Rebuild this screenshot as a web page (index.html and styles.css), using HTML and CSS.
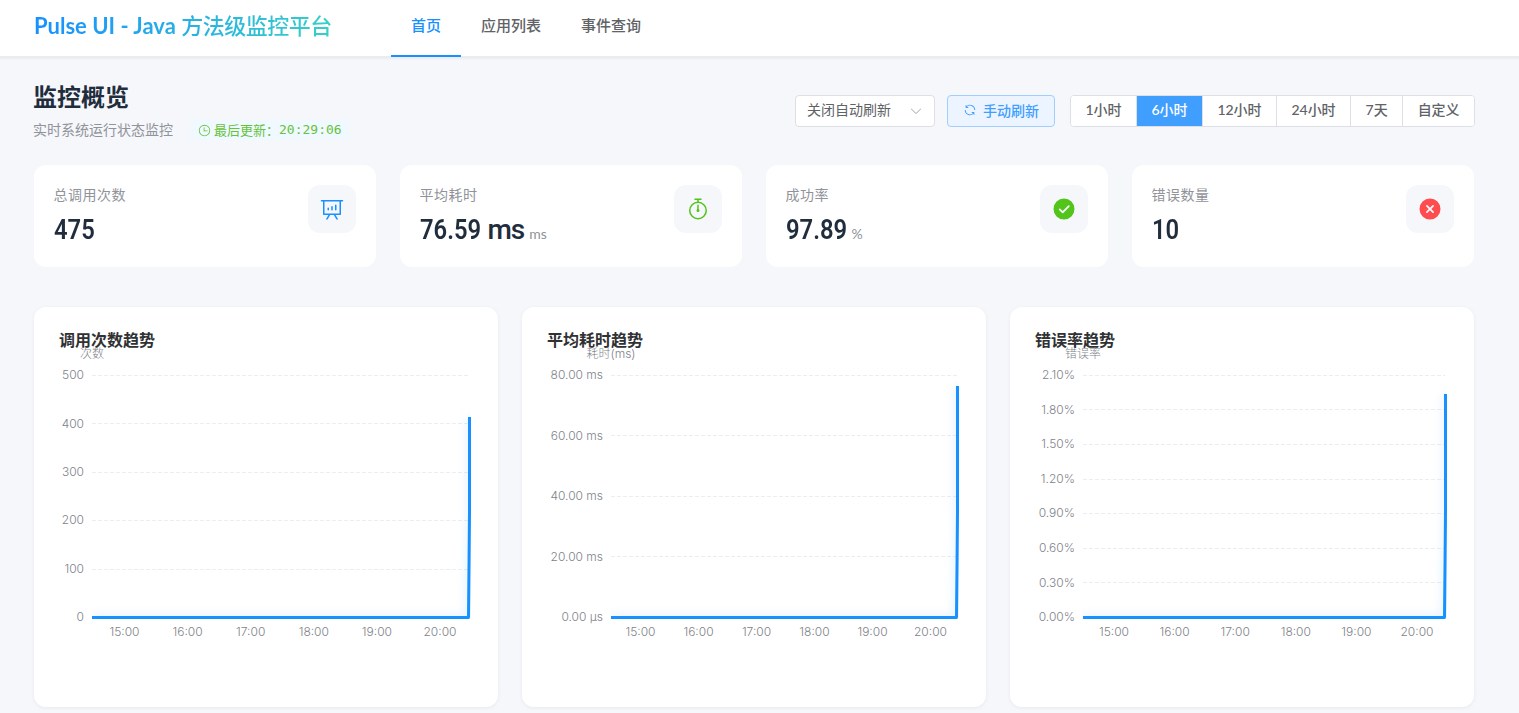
FILE: index.html
```html
<!DOCTYPE html>
<html lang="zh-CN">
<head>
  <meta charset="UTF-8" />
  <meta name="viewport" content="width=device-width, initial-scale=1.0"/>
  <title>Pulse UI</title>
  <link rel="stylesheet" href="styles.css">
</head>
<body>

  <header class="header">
    <div class="logo"><span class="logo-en">Pulse UI - Java </span>方法级监控平台</div>
    <nav class="nav">
      <a class="nav-item active" href="#">首页</a>
      <a class="nav-item" href="#">应用列表</a>
      <a class="nav-item" href="#">事件查询</a>
    </nav>
  </header>

  <main class="dashboard">
    <div class="page-header">
      <div class="page-title">
        <h2>监控概览</h2>
        <div class="subtitle">
          <span>实时系统运行状态监控</span>
          <span class="last-update">
            <svg class="icon" viewBox="0 0 1024 1024"><path d="M512 896a384 384 0 1 0 0-768 384 384 0 0 0 0 768m0 64a448 448 0 1 1 0-896 448 448 0 0 1 0 896"/><path d="M480 256a32 32 0 0 1 32 32v256a32 32 0 0 1-64 0V288a32 32 0 0 1 32-32"/><path d="M480 512h256q32 0 32 32t-32 32H480q-32 0-32-32t32-32"/></svg>
            <span>最后更新：</span><span class="time">20:29:06</span>
          </span>
        </div>
      </div>
      <div class="controls">
        <div class="select">
          <span>关闭自动刷新</span>
          <svg class="arrow" viewBox="0 0 1024 1024"><path d="M831.872 340.864 512 652.672 192.128 340.864a30.592 30.592 0 0 0-42.752 0 29.12 29.12 0 0 0 0 41.6L489.664 714.24a32 32 0 0 0 44.672 0l340.288-331.712a29.12 29.12 0 0 0 0-41.728 30.592 30.592 0 0 0-42.752 0z"/></svg>
        </div>
        <button class="refresh">
          <svg class="icon" viewBox="0 0 1024 1024"><path d="M771.776 794.88A384 384 0 0 1 128 512h64a320 320 0 0 0 555.712 216.448H654.72a32 32 0 1 1 0-64h149.056a32 32 0 0 1 32 32v148.928a32 32 0 1 1-64 0v-50.56zM276.288 295.616h92.992a32 32 0 0 1 0 64H220.16a32 32 0 0 1-32-32V178.56a32 32 0 0 1 64 0v50.56A384 384 0 0 1 896.128 512h-64a320 320 0 0 0-555.776-216.384z"/></svg>
          <span>手动刷新</span>
        </button>
        <div class="range">
          <button>1小时</button>
          <button class="active">6小时</button>
          <button>12小时</button>
          <button>24小时</button>
          <button>7天</button>
          <button>自定义</button>
        </div>
      </div>
    </div>

    <div class="stats">
      <div class="stat-card">
        <div>
          <div class="stat-label">总调用次数</div>
          <div class="stat-value"><span class="num">475</span></div>
        </div>
        <div class="stat-icon blue">
          <svg viewBox="0 0 1024 1024"><path d="m665.216 768 110.848 192h-73.856L591.36 768H433.024L322.176 960H248.32l110.848-192H160a32 32 0 0 1-32-32V192H64a32 32 0 0 1 0-64h896a32 32 0 1 1 0 64h-64v544a32 32 0 0 1-32 32zM832 192H192v512h640zM352 448a32 32 0 0 1 32 32v64a32 32 0 0 1-64 0v-64a32 32 0 0 1 32-32m160-64a32 32 0 0 1 32 32v128a32 32 0 0 1-64 0V416a32 32 0 0 1 32-32m160-64a32 32 0 0 1 32 32v192a32 32 0 1 1-64 0V352a32 32 0 0 1 32-32"/></svg>
        </div>
      </div>
      <div class="stat-card">
        <div>
          <div class="stat-label">平均耗时</div>
          <div class="stat-value"><span class="num">76.59</span> <span class="num-unit">ms</span><span class="unit">ms</span></div>
        </div>
        <div class="stat-icon green">
          <svg viewBox="0 0 1024 1024"><path d="M512 896a320 320 0 1 0 0-640 320 320 0 0 0 0 640m0 64a384 384 0 1 1 0-768 384 384 0 0 1 0 768"/><path d="M512 320a32 32 0 0 1 32 32l-.512 224a32 32 0 1 1-64 0L480 352a32 32 0 0 1 32-32"/><path d="M448 576a64 64 0 1 0 128 0 64 64 0 1 0-128 0m96-448v128h-64V128h-96a32 32 0 0 1 0-64h256a32 32 0 1 1 0 64z"/></svg>
        </div>
      </div>
      <div class="stat-card">
        <div>
          <div class="stat-label">成功率</div>
          <div class="stat-value"><span class="num">97.89</span><span class="unit">%</span></div>
        </div>
        <div class="stat-icon green">
          <svg viewBox="0 0 1024 1024"><path d="M512 64a448 448 0 1 1 0 896 448 448 0 0 1 0-896m-55.808 536.384-99.52-99.584a38.4 38.4 0 1 0-54.336 54.336l126.72 126.72a38.272 38.272 0 0 0 54.336 0l262.4-262.464a38.4 38.4 0 1 0-54.272-54.336z"/></svg>
        </div>
      </div>
      <div class="stat-card">
        <div>
          <div class="stat-label">错误数量</div>
          <div class="stat-value"><span class="num">10</span></div>
        </div>
        <div class="stat-icon red">
          <svg viewBox="0 0 1024 1024"><path d="M512 64a448 448 0 1 1 0 896 448 448 0 0 1 0-896m0 393.664L407.936 353.6a38.4 38.4 0 1 0-54.336 54.336L457.664 512 353.6 616.064a38.4 38.4 0 1 0 54.336 54.336L512 566.336 616.064 670.4a38.4 38.4 0 1 0 54.336-54.336L566.336 512 670.4 407.936a38.4 38.4 0 1 0-54.336-54.336z"/></svg>
        </div>
      </div>
    </div>

    <div class="charts">
      <div class="chart-card" id="chart-calls"></div>
      <div class="chart-card" id="chart-time"></div>
      <div class="chart-card" id="chart-error"></div>
    </div>
  </main>

  <script src="script.js"></script>
</body>
</html>
```
FILE: styles.css
```css
* {
  box-sizing: border-box;
}
body {
  margin: 0;
  height: 713px;
  overflow: hidden;
  background-color: #f5f7fb;
  font-family: Lato, "Noto Sans CJK SC", sans-serif;
  color: #606266;
}
button {
  font-family: inherit;
  cursor: pointer;
}
svg {
  fill: currentColor;
}

/* header */
.header {
  display: flex;
  height: 56px;
  padding-left: 34px;
  background: #fff;
  box-shadow: 0 2px 2px 1px rgba(0, 41, 41, 0.05);
}
.logo {
  width: 297px;
  margin-right: 60px;
  font-size: 22px;
  font-weight: 500;
  line-height: 52px;
  letter-spacing: -0.5px;
  white-space: nowrap;
  background: linear-gradient(90deg, #1890ff, #36cfc9);
  -webkit-background-clip: text;
  background-clip: text;
  color: transparent;
}
.logo-en {
  font-weight: 700;
  letter-spacing: 0;
}
.nav {
  display: flex;
}
.nav-item {
  height: 57px;
  padding: 0 20px;
  line-height: 51px;
  font-size: 15px;
  font-weight: 500;
  color: #606266;
  text-decoration: none;
  border-bottom: 2px solid transparent;
}
.nav-item.active {
  color: #1890ff;
  border-bottom-color: #1890ff;
}

/* title and controls */
.dashboard {
  width: 1474px;
  padding: 24px 0 0 34px;
}
.page-header {
  display: flex;
  justify-content: space-between;
  height: 85px;
}
.page-title h2 {
  margin: 0 0 0 -1px;
  font-size: 24px;
  line-height: 34px;
  font-weight: 600;
  color: #1f2d3d;
}
.subtitle {
  display: flex;
  align-items: center;
  gap: 17px;
  margin: 6px 0 0 -1px;
  font-size: 14px;
  line-height: 20px;
  color: #909399;
}
.last-update {
  display: flex;
  align-items: center;
  height: 20px;
  padding: 0 8px;
  border-radius: 4px;
  background: #f0f9ff;
  color: #67c23a;
  font-size: 13px;
}
.last-update .icon {
  width: 13px;
  height: 13px;
  margin-right: 3px;
}
.time {
  font-family: "DejaVu Sans Mono", monospace;
}
.controls {
  display: flex;
  margin: 15px -1px 0 0;
  height: 32px;
  font-size: 14px;
}
.select {
  display: flex;
  align-items: center;
  justify-content: space-between;
  width: 140px;
  margin-right: 12px;
  padding: 0 11px 4px;
  background: #fff;
  border: 1px solid #dcdfe6;
  border-radius: 4px;
}
.arrow {
  width: 14px;
  height: 14px;
  margin-top: 4px;
  color: #a8abb2;
}
.refresh {
  display: flex;
  align-items: center;
  gap: 6px;
  width: 108px;
  margin-right: 15px;
  padding: 0 15px 2px;
  font-size: 14px;
  font-weight: 500;
  white-space: nowrap;
  color: #409eff;
  background: #ecf5ff;
  border: 1px solid #a0cfff;
  border-radius: 4px;
}
.refresh .icon {
  width: 14px;
  height: 14px;
}
.range {
  display: flex;
  width: 405px;
  background: #fff;
  border: 1px solid #dcdfe6;
  border-radius: 4px;
  overflow: hidden;
}
.range button {
  flex: 1 0 auto;
  padding: 0 14px 4px;
  font-size: 14px;
  font-weight: 500;
  letter-spacing: -0.1px;
  color: #606266;
  background: #fff;
  border: 0;
  border-right: 1px solid #dcdfe6;
}
.range button:last-child {
  border-right: 0;
}
.range .active {
  color: #fff;
  background: #409eff;
}

/* stat cards */
.stats {
  display: grid;
  grid-template-columns: repeat(4, 1fr);
  gap: 24px;
}
.stat-card {
  display: flex;
  justify-content: space-between;
  height: 102px;
  padding: 20px 20px 20px 19.5px;
  background: #fff;
  border-radius: 12px;
}
.stat-label {
  font-size: 14px;
  line-height: 20px;
  letter-spacing: 0.5px;
  color: #909399;
}
.stat-value {
  margin-top: 7px;
  height: 36px;
  font-family: Roboto, sans-serif;
  font-size: 28px;
  line-height: 36px;
  font-weight: 600;
  color: #1f2d3d;
  white-space: nowrap;
}
/* narrow digits */
.num {
  display: inline-block;
  margin-right: -11px;
  transform: scaleX(0.85);
  transform-origin: left;
}
.num-unit {
  font-weight: 500;
  letter-spacing: -1px;
}
.unit {
  margin-left: 5px;
  font-family: Lato, sans-serif;
  font-size: 14px;
  font-weight: 400;
  color: #909399;
}
.stat-icon {
  display: flex;
  align-items: center;
  justify-content: center;
  width: 48px;
  height: 48px;
  border-radius: 12px;
  background: #f5f7fb;
}
.stat-icon svg {
  width: 24px;
  height: 24px;
}
.blue {
  color: #1890ff;
}
.green {
  color: #52c41a;
}
.red {
  color: #ff4d4f;
}

/* charts */
.charts {
  display: grid;
  grid-template-columns: repeat(3, 1fr);
  gap: 24px;
  margin-top: 40px;
}
.chart-card {
  height: 400px;
  background: #fff;
  border-radius: 12px;
  box-shadow: 0 1px 4px rgba(0, 21, 41, 0.06);
}
.chart-card svg {
  display: block;
}
.chart-title {
  font-size: 16px;
  font-weight: 600;
  fill: #303133;
}
.axis-text {
  font-family: Inter, "Noto Sans CJK SC", sans-serif;
  font-size: 12px;
  font-weight: 300;
  fill: #80838a;
}
.grid-line {
  stroke: #ebeef0;
  stroke-dasharray: 4 2;
}
.series {
  fill: none;
  stroke: #1890ff;
  stroke-width: 3;
  stroke-linejoin: round;
  filter: drop-shadow(0 0 5px rgba(24, 144, 255, 0.25));
}
```
FILE: script.js
```js
const TOP = 68.5;
const BOTTOM = 310.5;
const hours = ['15:00', '16:00', '17:00', '18:00', '19:00', '20:00'];

function drawChart(id, c) {
  const step = (BOTTOM - TOP) / (c.ticks.length - 1);
  let s = `<text class="chart-title" x="25" y="39">${c.title}</text>`;
  s += `<text class="axis-text" x="${c.left}" y="51" text-anchor="middle">${c.name}</text>`;

  c.ticks.forEach((tick, i) => {
    const y = Math.round(TOP + i * step - 0.6) + 0.5;
    const textY = Math.round(TOP + i * step + 3.7);
    s += `<text class="axis-text" x="${c.left - 8}" y="${textY}" text-anchor="end">${tick}</text>`;
    if (i < c.ticks.length - 1) {
      s += `<line class="grid-line" x1="${c.left}" y1="${y}" x2="${c.right - 1}" y2="${y}"/>`;
    }
  });

  hours.forEach((hour, i) => {
    s += `<text class="axis-text" x="${c.firstHour + i * c.hourStep}" y="329" text-anchor="middle">${hour}</text>`;
  });

  const x = c.right - 0.5;
  s += `<clipPath id="${id}-clip"><rect x="${c.left - 1}" y="${c.peak - 10}" width="${x - c.left + 2.5}" height="${BOTTOM + 11.5 - c.peak}"/></clipPath>`;
  s += `<g clip-path="url(#${id}-clip)"><path class="series" d="M${c.left} ${BOTTOM}H${x - 1}L${x - 0.4} ${BOTTOM - 60}L${x} ${BOTTOM - 105}V${c.peak}"/></g>`;

  document.getElementById(id).innerHTML = `<svg width="464" height="400">${s}</svg>`;
}

drawChart('chart-calls', {
  title: '调用次数趋势', name: '次数', left: 58, right: 436, peak: 110,
  firstHour: 90.5, hourStep: 63.1,
  ticks: ['500', '400', '300', '200', '100', '0']
});
drawChart('chart-time', {
  title: '平均耗时趋势', name: '耗时(ms)', left: 89, right: 436, peak: 79,
  firstHour: 118.5, hourStep: 58,
  ticks: ['80.00 ms', '60.00 ms', '40.00 ms', '20.00 ms', '0.00 μs']
});
drawChart('chart-error', {
  title: '错误率趋势', name: '错误率', left: 73, right: 436, peak: 87,
  firstHour: 104, hourStep: 60.6,
  ticks: ['2.10%', '1.80%', '1.50%', '1.20%', '0.90%', '0.60%', '0.30%', '0.00%']
});
```
